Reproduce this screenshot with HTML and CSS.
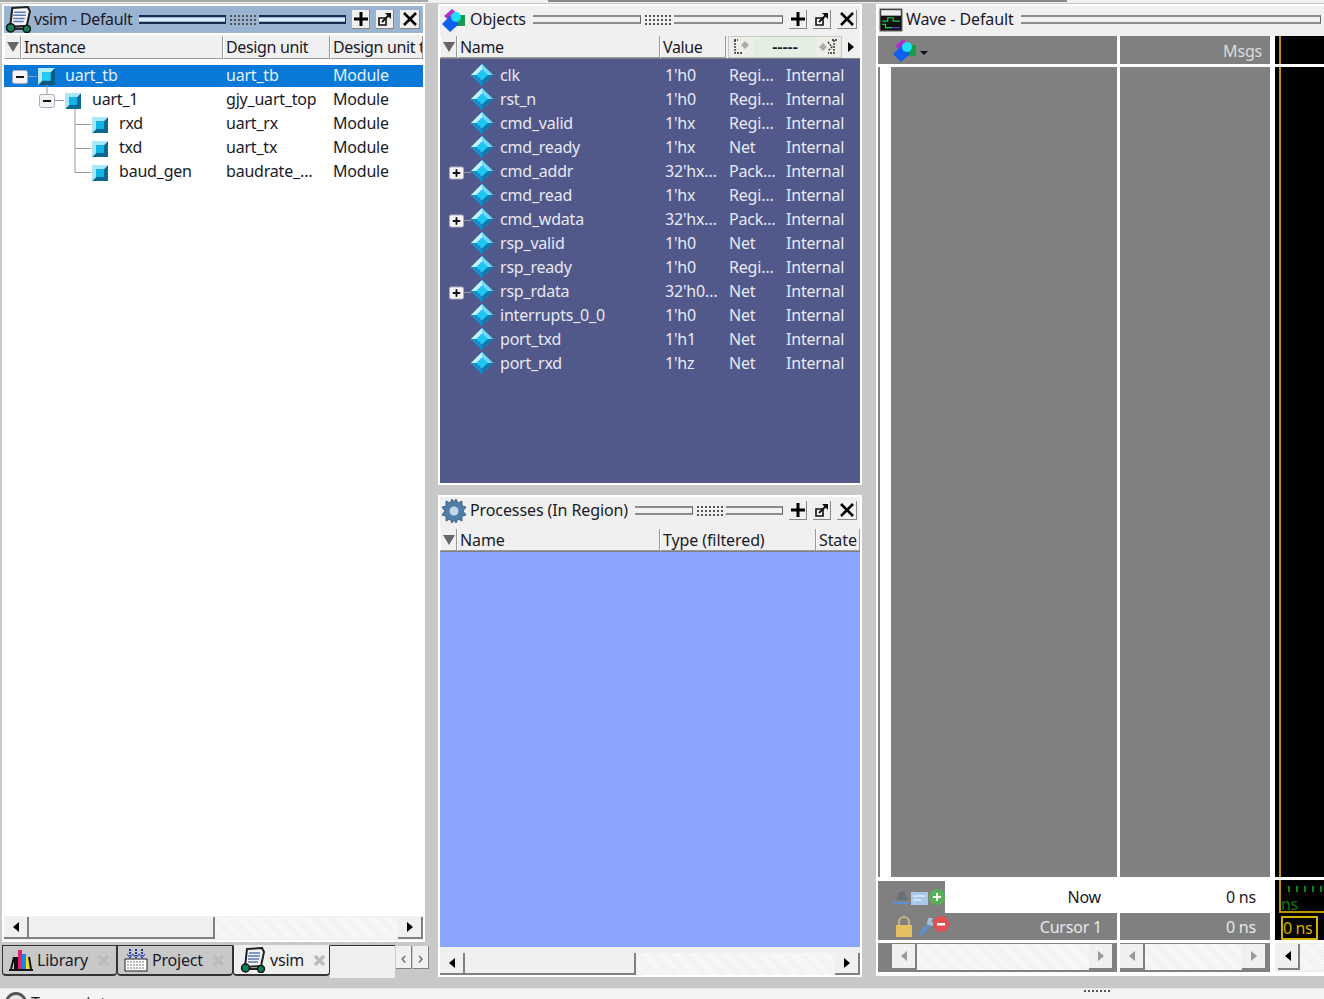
FILE: index.html
```html
<!DOCTYPE html>
<html>
<head>
<title>vsim - Default</title>
<link rel="stylesheet" href="styles.css">
</head>
<body>

<svg class="defs" width="0" height="0">
  <defs>
    <symbol id="i-module" viewBox="0 0 18 18">
      <path d="M1 17 L5 13 H13 V5 L17 1 V17 Z" fill="#0a6a8f"/>
      <path d="M1 1 H17 L13 5 H5 V13 L1 17 Z" fill="#a8e6f8"/>
      <rect x="5" y="5" width="8" height="8" fill="#12b4e8"/>
    </symbol>
    <symbol id="i-module-sel" viewBox="0 0 18 18">
      <path d="M1 17 L5 13 H13 V5 L17 1 V17 Z" fill="#0a5a80"/>
      <path d="M1 1 H17 L13 5 H5 V13 L1 17 Z" fill="#b8eefa"/>
      <rect x="5" y="5" width="8" height="8" fill="#22d0f4"/>
    </symbol>
    <symbol id="i-signal" viewBox="0 0 20 20">
      <path d="M10 0 L20 10 L10 20 L0 10 Z" fill="#12a8e0"/>
      <path d="M10 0 L20 10 H15 L10 5 Z" fill="#6ed8f8"/>
      <path d="M10 0 V5 L5 10 H0 Z" fill="#c4f2fc"/>
      <path d="M0 10 H5 L10 15 V20 Z" fill="#1490c8"/>
      <path d="M20 10 H15 L10 15 V20 Z" fill="#0f78b0"/>
      <path d="M10 5 L15 10 L10 15 L5 10 Z" fill="#22c4f4"/>
    </symbol>
    <symbol id="i-objects" viewBox="0 0 26 24">
      <path d="M11 1 L19 8 L11 15 L3 8 Z" fill="#b030c8"/>
      <rect x="13" y="7" width="11" height="11" fill="#1a9a4a"/>
      <path d="M9 8 L18 16 L9 24 L1 16 Z" fill="#1060f0"/>
      <circle cx="15" cy="9" r="5" fill="#20e0f8"/>
    </symbol>
    <symbol id="i-vsim" viewBox="0 0 26 26">
      <path d="M7 2 L22 1 L24 5 L21 19 L5 20 Z" fill="#f4f4f4" stroke="#222" stroke-width="2"/>
      <path d="M9 6 H20 M8 9 H20 M8 12 H19 M8 15 H18" stroke="#5878b8" stroke-width="1.4"/>
      <path d="M6 22 L20 22" stroke="#222" stroke-width="2"/>
      <circle cx="5.5" cy="21" r="4" fill="#108058" stroke="#111" stroke-width="1.4"/>
      <circle cx="21" cy="22" r="3.5" fill="#108058" stroke="#111" stroke-width="1.4"/>
    </symbol>
    <symbol id="i-gear" viewBox="0 0 24 24">
      <path d="M12 3 L14 0 L16 4 L20 2 L20 7 L24 8 L21 12 L24 16 L20 17 L20 22 L16 20 L14 24 L12 21 L10 24 L8 20 L4 22 L4 17 L0 16 L3 12 L0 8 L4 7 L4 2 L8 4 L10 0 Z" fill="#4f7fa8" stroke="#2e5270" stroke-width="0.8"/>
      <circle cx="12" cy="12" r="4.5" fill="#c4d8e8"/>
    </symbol>
    <symbol id="i-wave" viewBox="0 0 22 22">
      <rect x="1" y="1" width="20" height="20" fill="#111" stroke="#555"/>
      <rect x="2" y="2" width="18" height="5" fill="#eee"/>
      <path d="M3 12 H8 V9 H13 V12 H19" stroke="#20d040" fill="none"/>
      <path d="M3 15 H6 V18 H12" stroke="#20d040" fill="none"/>
      <path d="M12 18 H19" stroke="#6040f0" fill="none"/>
    </symbol>
    <symbol id="i-library" viewBox="0 0 24 24">
      <rect x="5" y="9" width="4" height="12" fill="#111"/>
      <rect x="9" y="2" width="4" height="19" fill="#e02070"/>
      <rect x="13" y="6" width="4" height="15" fill="#1888e8"/>
      <rect x="17" y="9" width="3" height="12" fill="#f0e020"/>
      <path d="M0 22 H24 M5 9 L2 21 M20 9 L22 21" stroke="#111" stroke-width="2"/>
    </symbol>
    <symbol id="i-project" viewBox="0 0 24 24">
      <rect x="1" y="11" width="22" height="12" fill="#fff" stroke="#222"/>
      <path d="M3 14 H21 M3 17 H21 M3 20 H21" stroke="#777" stroke-dasharray="2 1"/>
      <path d="M6 1 V8 M12 1 V8 M18 1 V8" stroke="#2838b0" stroke-width="2" stroke-dasharray="2 1"/>
      <path d="M3 6 L6 10 L9 6 M9 6 L12 10 L15 6 M15 6 L18 10 L21 6" stroke="#2838b0" fill="none"/>
    </symbol>
    <symbol id="i-minus" viewBox="0 0 16 14">
      <rect x="0.5" y="0.5" width="15" height="13" rx="2" fill="#f4f4f8" stroke="#a8a8c0"/>
      <rect x="4" y="6" width="8" height="2" fill="#111"/>
    </symbol>
    <symbol id="i-plus" viewBox="0 0 16 14">
      <rect x="0.5" y="0.5" width="15" height="13" rx="2" fill="#f4f4f8" stroke="#a8a8c0"/>
      <path d="M4 7 H12 M8 3 V11" stroke="#111" stroke-width="2"/>
    </symbol>
    <symbol id="i-add" viewBox="0 0 14 14">
      <path d="M0 7 H14 M7 0 V14" stroke="#000" stroke-width="3"/>
    </symbol>
    <symbol id="i-pop" viewBox="0 0 14 14">
      <path d="M1 6 H8 V13 H1 Z" fill="none" stroke="#111" stroke-width="1.6"/>
      <path d="M4 10 L11 3" stroke="#111" stroke-width="1.8"/>
      <path d="M7 1 H13 V7 Z" fill="#111"/>
    </symbol>
    <symbol id="i-close" viewBox="0 0 14 14">
      <path d="M1 1 L13 13 M13 1 L1 13" stroke="#000" stroke-width="2.6"/>
    </symbol>
    <symbol id="i-tabx" viewBox="0 0 13 13">
      <path d="M2 2 L11 11 M11 2 L2 11" stroke="#bcbcbc" stroke-width="3.4"/>
    </symbol>
  </defs>
</svg>

<div class="top-strip"><span class="top-a"></span><span class="top-b"></span><span class="top-c"></span></div>

<div class="workspace">

  <!-- left column: structure window and tabs -->
  <div class="col col-left">
    <div class="pane pane-structure">
      <div class="titlebar active">
        <svg class="title-icon" width="27" height="27"><use href="#i-vsim"/></svg>
        <span class="title-text">vsim - Default</span>
        <div class="grip"><span class="grip-lines"></span><span class="grip-dots"></span><span class="grip-lines"></span></div>
        <div class="title-btns">
          <button class="tbtn"><svg width="14" height="14"><use href="#i-add"/></svg></button>
          <button class="tbtn"><svg width="14" height="14"><use href="#i-pop"/></svg></button>
          <button class="tbtn tbtn-x"><svg width="14" height="14"><use href="#i-close"/></svg></button>
        </div>
      </div>
      <div class="header header-structure">
        <div class="hcell hcell-sort"><span class="sort-arrow"></span></div>
        <div class="hcell">Instance</div>
        <div class="hcell">Design unit</div>
        <div class="hcell">Design unit t</div>
      </div>
      <div class="tree">
        <div class="row-s selected">
          <div class="tree-cell">
            <svg class="gutter" width="60" height="24"><path d="M27 13.5 H37 M47 21 V24" stroke="#999" fill="none"/><use href="#i-minus" x="12" y="7" width="16" height="14"/><use href="#i-module-sel" x="37" y="4" width="19" height="19"/></svg>
            <span>uart_tb</span>
          </div>
          <div>uart_tb</div><div>Module</div>
        </div>
        <div class="row-s">
          <div class="tree-cell">
            <svg class="gutter" width="87" height="24"><path d="M47 0 V7 M54 13.5 H64 M75 22 V24" stroke="#999" fill="none"/><use href="#i-minus" x="39" y="7" width="16" height="14"/><use href="#i-module" x="64" y="5" width="18" height="18"/></svg>
            <span>uart_1</span>
          </div>
          <div>gjy_uart_top</div><div>Module</div>
        </div>
        <div class="row-s">
          <div class="tree-cell">
            <svg class="gutter" width="114" height="24"><path d="M75 0 V24 M75 13.5 H91" stroke="#999" fill="none"/><use href="#i-module" x="91" y="5" width="18" height="18"/></svg>
            <span>rxd</span>
          </div>
          <div>uart_rx</div><div>Module</div>
        </div>
        <div class="row-s">
          <div class="tree-cell">
            <svg class="gutter" width="114" height="24"><path d="M75 0 V24 M75 13.5 H91" stroke="#999" fill="none"/><use href="#i-module" x="91" y="5" width="18" height="18"/></svg>
            <span>txd</span>
          </div>
          <div>uart_tx</div><div>Module</div>
        </div>
        <div class="row-s">
          <div class="tree-cell">
            <svg class="gutter" width="114" height="24"><path d="M75 0 V13.5 H91" stroke="#999" fill="none"/><use href="#i-module" x="91" y="5" width="18" height="18"/></svg>
            <span>baud_gen</span>
          </div>
          <div>baudrate_…</div><div>Module</div>
        </div>
      </div>
      <div class="hscroll hscroll-left">
        <button class="sbtn"><span class="arr-l"></span></button>
        <div class="sthumb thumb-left"></div>
        <div class="strack"></div>
        <button class="sbtn"><span class="arr-r"></span></button>
      </div>
    </div>

    <div class="tabbar">
      <div class="tab tab-first"><svg width="24" height="24"><use href="#i-library"/></svg><span>Library</span><svg class="tab-x" width="13" height="13"><use href="#i-tabx"/></svg></div>
      <div class="tab"><svg width="24" height="24"><use href="#i-project"/></svg><span>Project</span><svg class="tab-x" width="13" height="13"><use href="#i-tabx"/></svg></div>
      <div class="tab tab-on"><svg width="26" height="26"><use href="#i-vsim"/></svg><span>vsim</span><svg class="tab-x" width="13" height="13"><use href="#i-tabx"/></svg></div>
      <div class="tab-rest"></div>
      <button class="tab-nav">‹</button>
      <button class="tab-nav">›</button>
    </div>
  </div>

  <!-- middle column: objects and processes -->
  <div class="col col-mid">
    <div class="pane pane-objects">
      <div class="titlebar">
        <svg class="title-icon" width="26" height="24"><use href="#i-objects"/></svg>
        <span class="title-text">Objects</span>
        <div class="grip"><span class="grip-lines"></span><span class="grip-dots"></span><span class="grip-lines"></span></div>
        <div class="title-btns">
          <button class="tbtn"><svg width="14" height="14"><use href="#i-add"/></svg></button>
          <button class="tbtn"><svg width="14" height="14"><use href="#i-pop"/></svg></button>
          <button class="tbtn tbtn-x"><svg width="14" height="14"><use href="#i-close"/></svg></button>
        </div>
      </div>
      <div class="header header-objects">
        <div class="hcell hcell-sort"><span class="sort-arrow"></span></div>
        <div class="hcell">Name</div>
        <div class="hcell">Value</div>
        <div class="filter">
          <svg class="filter-end" width="25" height="20" viewBox="0 0 25 20"><path d="M5 3 H9 M6 3 V16 H13" stroke="#222" stroke-dasharray="2 1" stroke-width="1.3" fill="none"/><path d="M16 4 L20 8 L16 12 L12 8 Z" fill="#aaa"/></svg>
          <span class="filter-text">-----</span>
          <svg class="filter-end" width="25" height="20" viewBox="0 0 25 20"><path d="M16 3 H21 M18 3 V16 H12 M12 5 L16 10 L12 14" stroke="#222" stroke-dasharray="2 1" stroke-width="1.3" fill="none"/><path d="M7 6 L11 10 L7 14 L3 10 Z" fill="#aaa"/></svg>
        </div>
        <div class="hcell-more"><span class="arr-r"></span></div>
      </div>
      <div class="objects-list" id="objects-list"></div>
    </div>

    <div class="pane pane-processes">
      <div class="titlebar">
        <svg class="title-icon" width="26" height="24"><use href="#i-gear"/></svg>
        <span class="title-text">Processes (In Region)</span>
        <div class="grip"><span class="grip-lines"></span><span class="grip-dots"></span><span class="grip-lines"></span></div>
        <div class="title-btns">
          <button class="tbtn"><svg width="14" height="14"><use href="#i-add"/></svg></button>
          <button class="tbtn"><svg width="14" height="14"><use href="#i-pop"/></svg></button>
          <button class="tbtn tbtn-x"><svg width="14" height="14"><use href="#i-close"/></svg></button>
        </div>
      </div>
      <div class="header header-processes">
        <div class="hcell hcell-sort"><span class="sort-arrow"></span></div>
        <div class="hcell">Name</div>
        <div class="hcell">Type (filtered)</div>
        <div class="hcell">State</div>
      </div>
      <div class="processes-body"></div>
      <div class="hscroll hscroll-mid">
        <button class="sbtn"><span class="arr-l"></span></button>
        <div class="sthumb thumb-mid"></div>
        <div class="strack"></div>
        <button class="sbtn"><span class="arr-r"></span></button>
      </div>
    </div>
  </div>

  <!-- right column: wave window, runs off the right edge -->
  <div class="col col-right">
    <div class="pane pane-wave">
      <div class="titlebar">
        <svg class="title-icon wave-icon" width="24" height="24"><use href="#i-wave"/></svg>
        <span class="title-text">Wave - Default</span>
        <div class="grip grip-wave"><span class="grip-lines"></span></div>
      </div>
      <div class="wave-grid">
        <div class="wave-col wave-names">
          <div class="wave-head">
            <svg width="26" height="24"><use href="#i-objects"/></svg>
            <span class="caret"></span>
          </div>
          <div class="wave-body"><div class="names-stripe"></div><div class="names-fill"></div></div>
          <div class="wave-now">
            <div class="now-icons">
              <svg width="54" height="24" viewBox="0 0 54 24"><path d="M5 15 L8 7 L13 6 L17 15 Z" fill="#6a7078"/><path d="M2 18 H18" stroke="#5c90d0" stroke-width="2"/><rect x="20" y="7" width="17" height="13" fill="#a8c8e8"/><path d="M22 11 H34 M22 15 H30" stroke="#fff"/><circle cx="46" cy="12" r="8" fill="#58b058"/><path d="M42 12 H50 M46 8 V16" stroke="#fff" stroke-width="2"/></svg>
            </div>
            <div class="now-label">Now</div>
          </div>
          <div class="wave-cursor">
            <svg width="62" height="24" viewBox="0 0 62 24"><path d="M9 10 V7 A5 5 0 0 1 19 7 V10" fill="none" stroke="#c8b880" stroke-width="2"/><rect x="6" y="10" width="16" height="12" fill="#e4c060"/><path d="M30 20 L40 9" stroke="#5c90d0" stroke-width="4"/><path d="M38 3 L43 3 L41 7 L45 8 L42 11 L37 9 Z" fill="#a8c0d8"/><circle cx="51" cy="9" r="8" fill="#e05050"/><rect x="47" y="8" width="8" height="2.5" fill="#fff"/></svg>
            <span>Cursor 1</span>
          </div>
          <div class="wave-scroll">
            <button class="sbtn sbtn-dim"><span class="arr-l dim"></span></button>
            <div class="strack"></div>
            <button class="sbtn sbtn-dim"><span class="arr-r dim"></span></button>
          </div>
        </div>
        <div class="wave-col wave-values">
          <div class="wave-head msgs">Msgs</div>
          <div class="wave-body"></div>
          <div class="wave-now value-now">0 ns</div>
          <div class="wave-cursor value-cursor">0 ns</div>
          <div class="wave-scroll">
            <button class="sbtn sbtn-dim"><span class="arr-l dim"></span></button>
            <div class="strack"></div>
            <button class="sbtn sbtn-dim"><span class="arr-r dim"></span></button>
          </div>
        </div>
        <div class="wave-col wave-trace">
          <div class="wave-head trace-head"><span class="cursor-line"></span></div>
          <div class="wave-body trace-body"><span class="cursor-line"></span></div>
          <div class="trace-now">
            <div class="ruler">
              <div class="ticks"></div>
              <div class="ruler-text">ns</div>
            </div>
          </div>
          <div class="trace-cursor"><span class="cursor-box">0 ns</span></div>
          <div class="wave-scroll trace-scroll">
            <button class="sbtn"><span class="arr-l"></span></button>
            <div class="strack"></div>
          </div>
        </div>
      </div>
    </div>
  </div>
</div>

<div class="transcript">
  <svg class="transcript-icon" width="22" height="22" viewBox="0 0 22 22"><circle cx="11" cy="11" r="9.5" fill="#e8e8e8" stroke="#555" stroke-width="3"/></svg>
  <span class="transcript-title">Transcript</span>
  <span class="transcript-dots"></span>
</div>

<script>
  const signals = [
    ['clk', "1'h0", 'Regi…', false],
    ['rst_n', "1'h0", 'Regi…', false],
    ['cmd_valid', "1'hx", 'Regi…', false],
    ['cmd_ready', "1'hx", 'Net', false],
    ['cmd_addr', "32'hx…", 'Pack…', true],
    ['cmd_read', "1'hx", 'Regi…', false],
    ['cmd_wdata', "32'hx…", 'Pack…', true],
    ['rsp_valid', "1'h0", 'Net', false],
    ['rsp_ready', "1'h0", 'Regi…', false],
    ['rsp_rdata', "32'h0…", 'Net', true],
    ['interrupts_0_0', "1'h0", 'Net', false],
    ['port_txd', "1'h1", 'Net', false],
    ['port_rxd', "1'hz", 'Net', false]
  ];

  const list = document.getElementById('objects-list');
  signals.forEach((s) => {
    const expander = s[3] ? '<path d="M24 13.5 H31" stroke="#999"/><use href="#i-plus" x="9" y="7" width="15" height="14"/>' : '';
    list.insertAdjacentHTML('beforeend',
      `<div class="row-o">
        <svg class="gutter" width="58" height="24">${expander}<use href="#i-signal" x="31" y="1" width="22" height="22"/></svg>
        <span class="o-name">${s[0]}</span><span class="o-value">${s[1]}</span><span class="o-kind">${s[2]}</span><span>Internal</span>
      </div>`);
  });
</script>

</body>
</html>
```

FILE: styles.css
```css
* {
  box-sizing: border-box;
}

body {
  margin: 0;
  width: 1324px;
  height: 999px;
  overflow: hidden;
  display: flex;
  flex-direction: column;
  background-color: #c8c8c8;
  font-family: "Noto Sans", sans-serif;
  font-size: 16px;
  color: #1a1a2a;
}

button {
  font-family: inherit;
  padding: 0;
}

.defs {
  display: block;
  height: 0;
}

.top-strip {
  height: 3px;
  display: flex;
  background-color: #f0f0f0;
  flex-shrink: 0;
}

.top-a { width: 428px; background-color: #a8a8a8; height: 2px; }
.top-b { width: 519px; background-color: #888; height: 2px; margin-left: 120px; }
.top-c { flex: 1; }

.workspace {
  flex: 1;
  display: flex;
  min-height: 0;
  padding-top: 1px;
}

.col {
  display: flex;
  flex-direction: column;
}

.col-left { width: 423px; margin-left: 2px; height: 974px; }
.col-mid { width: 424px; margin-left: 13px; height: 973px; gap: 10px; }
.col-right { flex: 1; margin-left: 14px; height: 972px; }

.pane {
  background-color: #f0f0f0;
  border: 2px solid #fff;
  display: flex;
  flex-direction: column;
  min-height: 0;
}

.pane-structure { flex: 1; background-color: #fff; }
.pane-objects { height: 481px; }
.pane-processes { flex: 1; }
.pane-wave { height: 100%; border-right: 0; border-bottom-width: 4px; }

/* title bars */
.titlebar {
  height: 27px;
  display: flex;
  align-items: center;
  background-color: #f0f0f0;
  padding: 0 3px 0 1px;
  flex-shrink: 0;
}

.titlebar.active { background-color: #9ab3d0; }

.title-icon {
  flex-shrink: 0;
  margin-right: 3px;
}

.wave-icon {
  margin-right: 3px;
}

.title-text {
  white-space: nowrap;
  letter-spacing: -0.1px;
  margin: -1px 7px 0 0;
}

.active .title-text {
  letter-spacing: -0.35px;
  margin-left: -1px;
}

.grip {
  flex: 1;
  display: flex;
  align-items: center;
  gap: 3px;
  min-width: 0;
}

.grip-lines {
  flex: 1;
  height: 9px;
  border-top: 2px solid #8c8c8c;
  border-bottom: 2px solid #8c8c8c;
  border-right: 1px solid #666;
  background: linear-gradient(#f8f8f8, #f8f8f8) center / 100% 1px no-repeat;
}

.active .grip-lines {
  border-color: #1c2c50;
  background: linear-gradient(#d8ecff, #d8ecff) center / 100% 3px no-repeat;
}

.grip-dots {
  width: 27px;
  height: 11px;
  background-image: radial-gradient(#555 1px, transparent 1px);
  background-size: 4px 4px;
}

.title-btns {
  display: flex;
  gap: 6px;
  margin-left: 6px;
}

.tbtn {
  width: 18px;
  height: 19px;
  border: 0;
  border-right: 1px solid #888;
  border-bottom: 1px solid #888;
  background-color: #f0f0f0;
  display: flex;
  align-items: center;
  justify-content: center;
}

.tbtn-x {
  width: 20px;
}

/* column headers */
.header {
  height: 24px;
  margin-top: 2px;
  padding-top: 1px;
  display: grid;
  align-items: stretch;
  background-color: #f0f0f0;
  flex-shrink: 0;
  line-height: 23px;
}

.header-structure { grid-template-columns: 17px 202px 107px 1fr; }
.header-objects { grid-template-columns: 17px 203px 66px 116px 1fr; border-bottom: 1px solid #808080; }
.header-processes { grid-template-columns: 17px 203px 156px 1fr; height: 26px; padding-top: 3px; border-bottom: 1px solid #808080; }

.hcell {
  padding-left: 2px;
  border-right: 1px solid #9a9a9a;
  border-bottom: 1px solid #9a9a9a;
  border-left: 1px solid #fff;
  overflow: hidden;
  white-space: nowrap;
  letter-spacing: -0.35px;
}

.header-processes .hcell {
  letter-spacing: -0.1px;
}

.hcell-sort {
  padding: 6px 0 0 2px;
}

.sort-arrow {
  display: block;
  width: 0;
  height: 0;
  border-left: 6px solid transparent;
  border-right: 6px solid transparent;
  border-top: 10px solid #666;
}

.hcell-more {
  display: flex;
  align-items: center;
  justify-content: center;
}

.filter {
  display: flex;
  align-items: center;
  height: 22px;
  margin-left: 2px;
  background-color: #e4eee2;
  border: 1px solid #c8c8c8;
}

.filter-end {
  background-color: #ecefe8;
}

.filter-text {
  flex: 1;
  text-align: center;
  font-size: 16px;
  line-height: 18px;
  font-weight: 600;
}

/* structure tree */
.tree {
  flex: 1;
  padding-top: 4px;
  background-color: #fff;
}

.row-s {
  height: 24px;
  display: grid;
  grid-template-columns: 222px 107px 1fr;
  align-items: center;
  line-height: 24px;
  white-space: nowrap;
  letter-spacing: -0.2px;
}

.row-s.selected {
  background: linear-gradient(#0a78d7, #0a78d7) bottom / 100% 22px no-repeat;
  color: #e4f2ff;
}

.tree-cell {
  display: flex;
  align-items: center;
  margin-left: -4px;
}

.gutter {
  flex-shrink: 0;
  margin-right: 5px;
}

/* objects list */
.objects-list {
  flex: 1;
  background-color: #50598a;
  color: #e8e8f4;
  padding-top: 4px;
}

.row-o {
  height: 24px;
  display: flex;
  align-items: center;
  white-space: nowrap;
  letter-spacing: -0.2px;
}

.row-o .gutter {
  margin-right: 2px;
}

.o-name { width: 165px; }
.o-value { width: 64px; }
.o-kind { width: 57px; }

.processes-body {
  flex: 1;
  background-color: #8aa4ff;
}

/* scroll bars */
.hscroll {
  display: flex;
  flex-shrink: 0;
  align-items: flex-end;
  background-color: #f0f0f0;
}

.hscroll-left {
  height: 24px;
  padding-bottom: 1px;
}

.hscroll-mid {
  height: 28px;
}

.sbtn,
.sthumb {
  height: 22px;
  background-color: #f0f0f0;
  border: 0;
  border-right: 2px solid #808080;
  border-bottom: 2px solid #808080;
  flex-shrink: 0;
  display: flex;
  align-items: center;
  justify-content: center;
}

.sbtn { width: 25px; }

.thumb-left { width: 186px; }
.thumb-mid { width: 171px; }

.strack {
  flex: 1;
  height: 22px;
  background-color: #fafafa;
  background-image: repeating-linear-gradient(45deg, #f0f0f0 0 1px, transparent 1px 2px);
}

.arr-l,
.arr-r {
  display: block;
  width: 0;
  height: 0;
  border-top: 5px solid transparent;
  border-bottom: 5px solid transparent;
}

.arr-l { border-right: 6px solid #000; }
.arr-r { border-left: 6px solid #000; }
.arr-l.dim { border-right-color: #999; }
.arr-r.dim { border-left-color: #999; }

/* tabs */
.tabbar {
  height: 36px;
  width: 427px;
  display: flex;
  padding-top: 3px;
  flex-shrink: 0;
}

.tab {
  width: 116px;
  height: 31px;
  display: flex;
  align-items: center;
  gap: 4px;
  padding-left: 6px;
  background-color: #c8c8c8;
  border: 1px solid #333;
  border-bottom-width: 2px;
  border-radius: 0 0 4px 4px;
  letter-spacing: -0.2px;
  white-space: nowrap;
}

.tab-first {
  width: 115px;
}

.tab-on {
  background-color: #f0f0f0;
  width: 97px;
  border-top-color: #f0f0f0;
}

.tab-x {
  margin-left: 5px;
}

.tab-rest {
  flex: 1;
  height: 33px;
  background-color: #f0f0f0;
  border-top: 1px solid #333;
}

.tab-nav {
  width: 16px;
  height: 23px;
  margin: 1px 0 0 1px;
  border: 0;
  border-right: 1px solid #808080;
  border-bottom: 1px solid #808080;
  background-color: #f0f0f0;
  font-size: 18px;
  line-height: 18px;
  color: #666;
}

/* wave window */
.wave-grid {
  flex: 1;
  margin-top: 3px;
  display: grid;
  grid-template-columns: 239px 150px 1fr;
  gap: 0 3px;
  min-height: 0;
  background-color: #fff;
}

.wave-trace { margin-left: 2px; }

.wave-col {
  display: flex;
  flex-direction: column;
  min-height: 0;
}

.wave-head {
  height: 28px;
  background-color: #808080;
  margin-bottom: 3px;
  flex-shrink: 0;
  display: flex;
  align-items: center;
  padding-left: 14px;
}

.caret {
  width: 0;
  height: 0;
  margin: 6px 0 0 2px;
  border-left: 4px solid transparent;
  border-right: 4px solid transparent;
  border-top: 4px solid #111;
}

.msgs {
  justify-content: flex-end;
  padding: 2px 8px 0 0;
  color: #dcdcdc;
  letter-spacing: -0.2px;
}

.wave-body {
  flex: 1;
  background-color: #808080;
  display: flex;
}

.names-stripe {
  width: 11px;
  margin-left: 2px;
  background-color: #fff;
}

.names-fill {
  flex: 1;
}

.wave-now {
  height: 36px;
  padding-top: 4px;
  flex-shrink: 0;
  display: flex;
  background-color: #fff;
  align-items: center;
  letter-spacing: -0.2px;
}

.now-icons {
  width: 67px;
  height: 100%;
  padding-left: 13px;
  display: flex;
  align-items: center;
  background-color: #808080;
}

.now-label {
  flex: 1;
  text-align: right;
  padding-right: 16px;
}

.value-now {
  justify-content: flex-end;
  padding-right: 14px;
}

.wave-cursor {
  height: 27px;
  flex-shrink: 0;
  display: flex;
  align-items: center;
  background-color: #808080;
  color: #e8e8e8;
  letter-spacing: -0.2px;
}

.wave-cursor svg {
  margin-left: 12px;
}

.wave-cursor span {
  margin-left: auto;
  padding-right: 15px;
}

.value-cursor {
  justify-content: flex-end;
  padding-right: 14px;
}

.wave-scroll {
  height: 29px;
  margin-top: 3px;
  padding: 1px 3px 1px 14px;
  flex-shrink: 0;
  display: flex;
  background-color: #808080;
}

.wave-values .wave-scroll {
  padding-left: 0;
}

.wave-scroll .sbtn,
.wave-scroll .strack {
  height: 26px;
}

.trace-scroll {
  padding: 1px 0 1px 3px;
  background-color: #f0f0f0;
}

.trace-scroll .sbtn {
  width: 22px;
}

.trace-head,
.trace-body {
  background-color: #000;
  padding-left: 4px;
}

.cursor-line {
  width: 2px;
  align-self: stretch;
  background-color: #c09000;
}

.trace-now {
  height: 33px;
  margin-top: 3px;
  padding-left: 4px;
  flex-shrink: 0;
  background-color: #000;
}

.ruler {
  height: 100%;
  border-left: 2px solid #c09000;
  border-bottom: 2px solid #c09000;
  color: #0a7a0a;
  line-height: 16px;
  padding-top: 6px;
}

.ticks {
  height: 6px;
  margin-left: 7px;
  background-image: linear-gradient(90deg, #0a8a0a 2px, transparent 2px);
  background-size: 8px 6px;
}

.ruler-text {
  margin-top: 4px;
  letter-spacing: -0.4px;
}

.trace-cursor {
  height: 27px;
  flex-shrink: 0;
  background-color: #000;
  padding: 3px 0 0 6px;
}

.cursor-box {
  display: block;
  width: 37px;
  height: 24px;
  border: 2px solid #d8b000;
  color: #d8b000;
  line-height: 21px;
  white-space: nowrap;
  letter-spacing: -0.4px;
}

/* transcript, cut off by the window edge */
.transcript {
  height: 11px;
  flex-shrink: 0;
  background-color: #f4f4f4;
  margin-top: auto;
  display: flex;
  overflow: hidden;
  align-items: flex-start;
  border-top: 1px solid #e8e8e8;
}

.transcript-icon {
  margin: 3px 0 0 5px;
  flex-shrink: 0;
}

.transcript-title {
  margin: 2px 0 0 4px;
  line-height: 24px;
}

.transcript-dots {
  width: 28px;
  height: 4px;
  margin: 0 0 0 977px;
  background-image: radial-gradient(#555 1px, transparent 1px);
  background-size: 4px 4px;
}
```
